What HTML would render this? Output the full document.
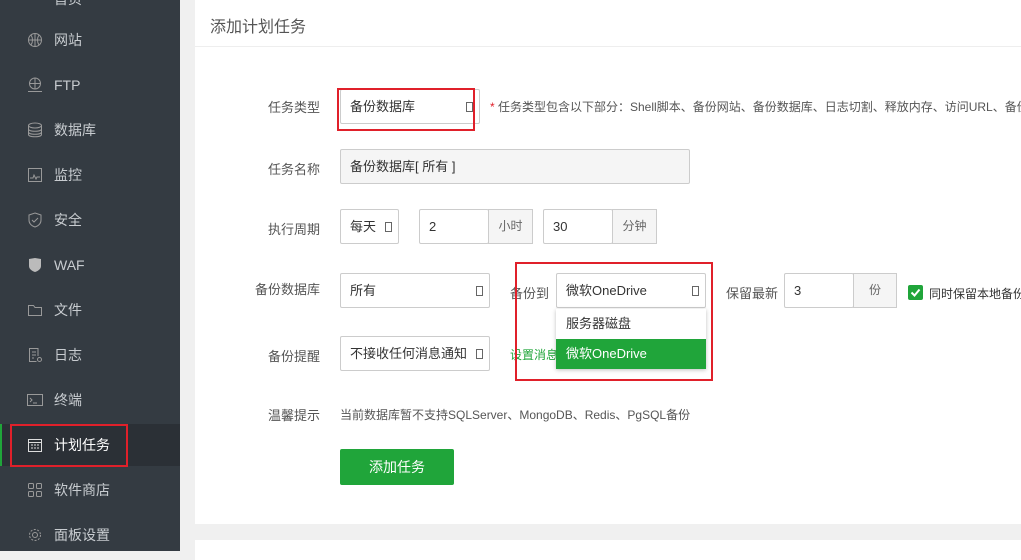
<!DOCTYPE html>
<html><head><meta charset="utf-8"><style>
*{box-sizing:border-box;margin:0;padding:0}
body{width:1021px;height:551px;overflow:hidden;background:#f0f0f0;font-family:"Liberation Sans","Noto Sans CJK SC",sans-serif;position:relative;font-size:13px;color:#555}
.sb{position:absolute;left:0;top:0;width:180px;height:551px;background:#343b42}
.it{position:absolute;left:0;width:180px;height:42px;line-height:42px;color:#c8ccd0;font-size:14px}
.it span{position:absolute;left:54px}
.it svg{position:absolute;left:27px;top:13px}
.act{background:#2b3036;color:#fff}
.card{position:absolute;left:195px;top:0;width:826px;height:524px;background:#fff}
.card2{position:absolute;left:195px;top:540px;width:826px;height:20px;background:#fff}
.abs{position:absolute}
.lbl{position:absolute;width:100px;text-align:right;left:220px;font-size:13px;color:#555}
.box{position:absolute;border:1px solid #ccc;background:#fff;height:35px;line-height:33px;padding-left:9px;font-size:13px;color:#333;border-radius:2px}
.addon{position:absolute;border:1px solid #ccc;background:#f5f5f5;height:35px;line-height:33px;text-align:center;font-size:12px;color:#666}
.arr{position:absolute;right:6px;top:12px;width:7px;height:10px;border:1px solid #666}
.red{position:absolute;border:2px solid #e0202a}
</style></head><body>
<div class="sb">
<div class="it" style="top:-22px"><span>首页</span></div>
<div class="it" style="top:19px"><svg width="16" height="16"><circle cx="8" cy="8" r="6.5" fill="none" stroke="#999"/><path d="M1.5 8h13M8 1.5v13M4 3c2 3 2 7 0 10M12 3c-2 3-2 7 0 10" stroke="#999" fill="none"/></svg><span>网站</span></div>
<div class="it" style="top:64px"><svg width="16" height="16"><circle cx="8" cy="6.5" r="5.5" fill="none" stroke="#999"/><path d="M2.5 6.5h11M8 1v11M1 14.5h14" stroke="#999"/></svg><span>FTP</span></div>
<div class="it" style="top:109px"><svg width="16" height="16"><ellipse cx="8" cy="3.5" rx="6.5" ry="2.5" fill="none" stroke="#999"/><path d="M1.5 3.5v9c0 3 13 3 13 0v-9M1.5 7c0 3 13 3 13 0M1.5 10c0 3 13 3 13 0" fill="none" stroke="#999"/></svg><span>数据库</span></div>
<div class="it" style="top:154px"><svg width="16" height="16"><rect x="1.5" y="1.5" width="13" height="13" fill="none" stroke="#999"/><path d="M3 11h3l1-3 2 4 1-2h3" fill="none" stroke="#999"/></svg><span>监控</span></div>
<div class="it" style="top:199px"><svg width="16" height="16"><path d="M8 1l6 2v5c0 4-3 6-6 7-3-1-6-3-6-7V3z" fill="none" stroke="#999"/><path d="M5 8l2 2 4-4" fill="none" stroke="#999"/></svg><span>安全</span></div>
<div class="it" style="top:244px"><svg width="16" height="16"><path d="M2 2l6-1 6 1v7c0 3-3 5-6 6-3-1-6-3-6-6z" fill="#bbb"/></svg><span>WAF</span></div>
<div class="it" style="top:289px"><svg width="16" height="16"><path d="M1.5 3.5h5l1.5 2h6.5v8h-13z" fill="none" stroke="#999"/></svg><span>文件</span></div>
<div class="it" style="top:334px"><svg width="16" height="16"><path d="M11 9V1.5H2.5v13h7M5 5h4M5 8h4M5 11h2" fill="none" stroke="#999"/><circle cx="12.5" cy="12.5" r="2" fill="none" stroke="#999"/></svg><span>日志</span></div>
<div class="it" style="top:379px"><svg width="16" height="16"><rect x="0.5" y="2.5" width="15" height="11" fill="none" stroke="#999"/><path d="M3 6l2 2-2 2M6 11h4" fill="none" stroke="#999"/></svg><span>终端</span></div>
<div class="it act" style="top:424px"><div class="abs" style="left:0;top:0;width:2px;height:42px;background:#20a53a"></div><svg width="16" height="16"><rect x="1.5" y="2.5" width="13" height="12" fill="none" stroke="#ddd"/><path d="M1.5 5.5h13M4 8h2M7 8h2M10 8h2M4 11h2M7 11h2M10 11h2" stroke="#ddd"/></svg><span>计划任务</span></div>
<div class="it" style="top:469px"><svg width="16" height="16"><rect x="1.5" y="1.5" width="5" height="5" rx="1" fill="none" stroke="#999"/><rect x="9.5" y="1.5" width="5" height="5" rx="1" fill="none" stroke="#999"/><rect x="1.5" y="9.5" width="5" height="5" rx="1" fill="none" stroke="#999"/><rect x="9.5" y="9.5" width="5" height="5" rx="1" fill="none" stroke="#999"/></svg><span>软件商店</span></div>
<div class="it" style="top:514px"><svg width="16" height="16"><circle cx="8" cy="8" r="5.5" fill="none" stroke="#999" stroke-dasharray="2 1.5"/><circle cx="8" cy="8" r="2.5" fill="none" stroke="#999"/></svg><span>面板设置</span></div>
<div class="red" style="left:10px;top:424px;width:118px;height:43px"></div>
</div>
<div class="card"></div>
<div class="card2"></div>
<div class="abs" style="left:210px;top:13px;font-size:16px;color:#555">添加计划任务</div>
<div class="abs" style="left:195px;top:46px;width:826px;height:1px;background:#eee"></div>

<div class="lbl" style="top:97px">任务类型</div>
<div class="box" style="left:340px;top:89px;width:140px">备份数据库<div class="arr"></div></div>
<div class="red" style="left:337px;top:88px;width:138px;height:43px"></div>
<div class="abs" style="left:490px;top:98px;font-size:12px;color:#555;white-space:nowrap"><span style="color:#e0202a">*</span> 任务类型包含以下部分：Shell脚本、备份网站、备份数据库、日志切割、释放内存、访问URL、备份</div>

<div class="lbl" style="top:159px">任务名称</div>
<div class="box" style="left:340px;top:149px;width:350px;background:#f5f5f5">备份数据库[ 所有 ]</div>

<div class="lbl" style="top:219px">执行周期</div>
<div class="box" style="left:340px;top:209px;width:59px">每天<div class="arr"></div></div>
<div class="box" style="left:419px;top:209px;width:70px">2</div>
<div class="addon" style="left:488px;top:209px;width:45px">小时</div>
<div class="box" style="left:543px;top:209px;width:70px">30</div>
<div class="addon" style="left:612px;top:209px;width:45px">分钟</div>

<div class="lbl" style="top:279px">备份数据库</div>
<div class="box" style="left:340px;top:273px;width:150px">所有<div class="arr"></div></div>
<div class="abs" style="left:510px;top:283px">备份到</div>
<div class="box" style="left:556px;top:273px;width:150px">微软OneDrive<div class="arr"></div></div>
<div class="abs" style="left:726px;top:283px">保留最新</div>
<div class="box" style="left:784px;top:273px;width:70px">3</div>
<div class="addon" style="left:853px;top:273px;width:44px">份</div>
<div class="abs" style="left:908px;top:285px;width:15px;height:15px;background:#20a53a;border-radius:2px"><svg width="15" height="15"><path d="M3.5 7.5l3 3 5-6" stroke="#fff" stroke-width="2" fill="none"/></svg></div>
<div class="abs" style="left:929px;top:285px;font-size:12px;color:#333;white-space:nowrap">同时保留本地备份</div>

<div class="lbl" style="top:346px">备份提醒</div>
<div class="box" style="left:340px;top:336px;width:150px">不接收任何消息通知<div class="arr"></div></div>
<div class="abs" style="left:510px;top:346px;font-size:12px;color:#20a53a">设置消息</div>

<div class="abs" style="left:556px;top:309px;width:150px;height:60px;background:#fff;box-shadow:0 1px 4px rgba(0,0,0,.25)">
<div style="height:30px;line-height:30px;padding-left:10px;color:#333">服务器磁盘</div>
<div style="height:30px;line-height:30px;padding-left:10px;color:#fff;background:#20a53a">微软OneDrive</div>
</div>
<div class="red" style="left:515px;top:262px;width:198px;height:119px"></div>

<div class="lbl" style="top:405px">温馨提示</div>
<div class="abs" style="left:340px;top:406px;font-size:12px;color:#555">当前数据库暂不支持SQLServer、MongoDB、Redis、PgSQL备份</div>
<div class="abs" style="left:340px;top:449px;width:114px;height:36px;line-height:36px;text-align:center;background:#20a53a;color:#fff;font-size:14px;border-radius:2px">添加任务</div>
</body></html>
